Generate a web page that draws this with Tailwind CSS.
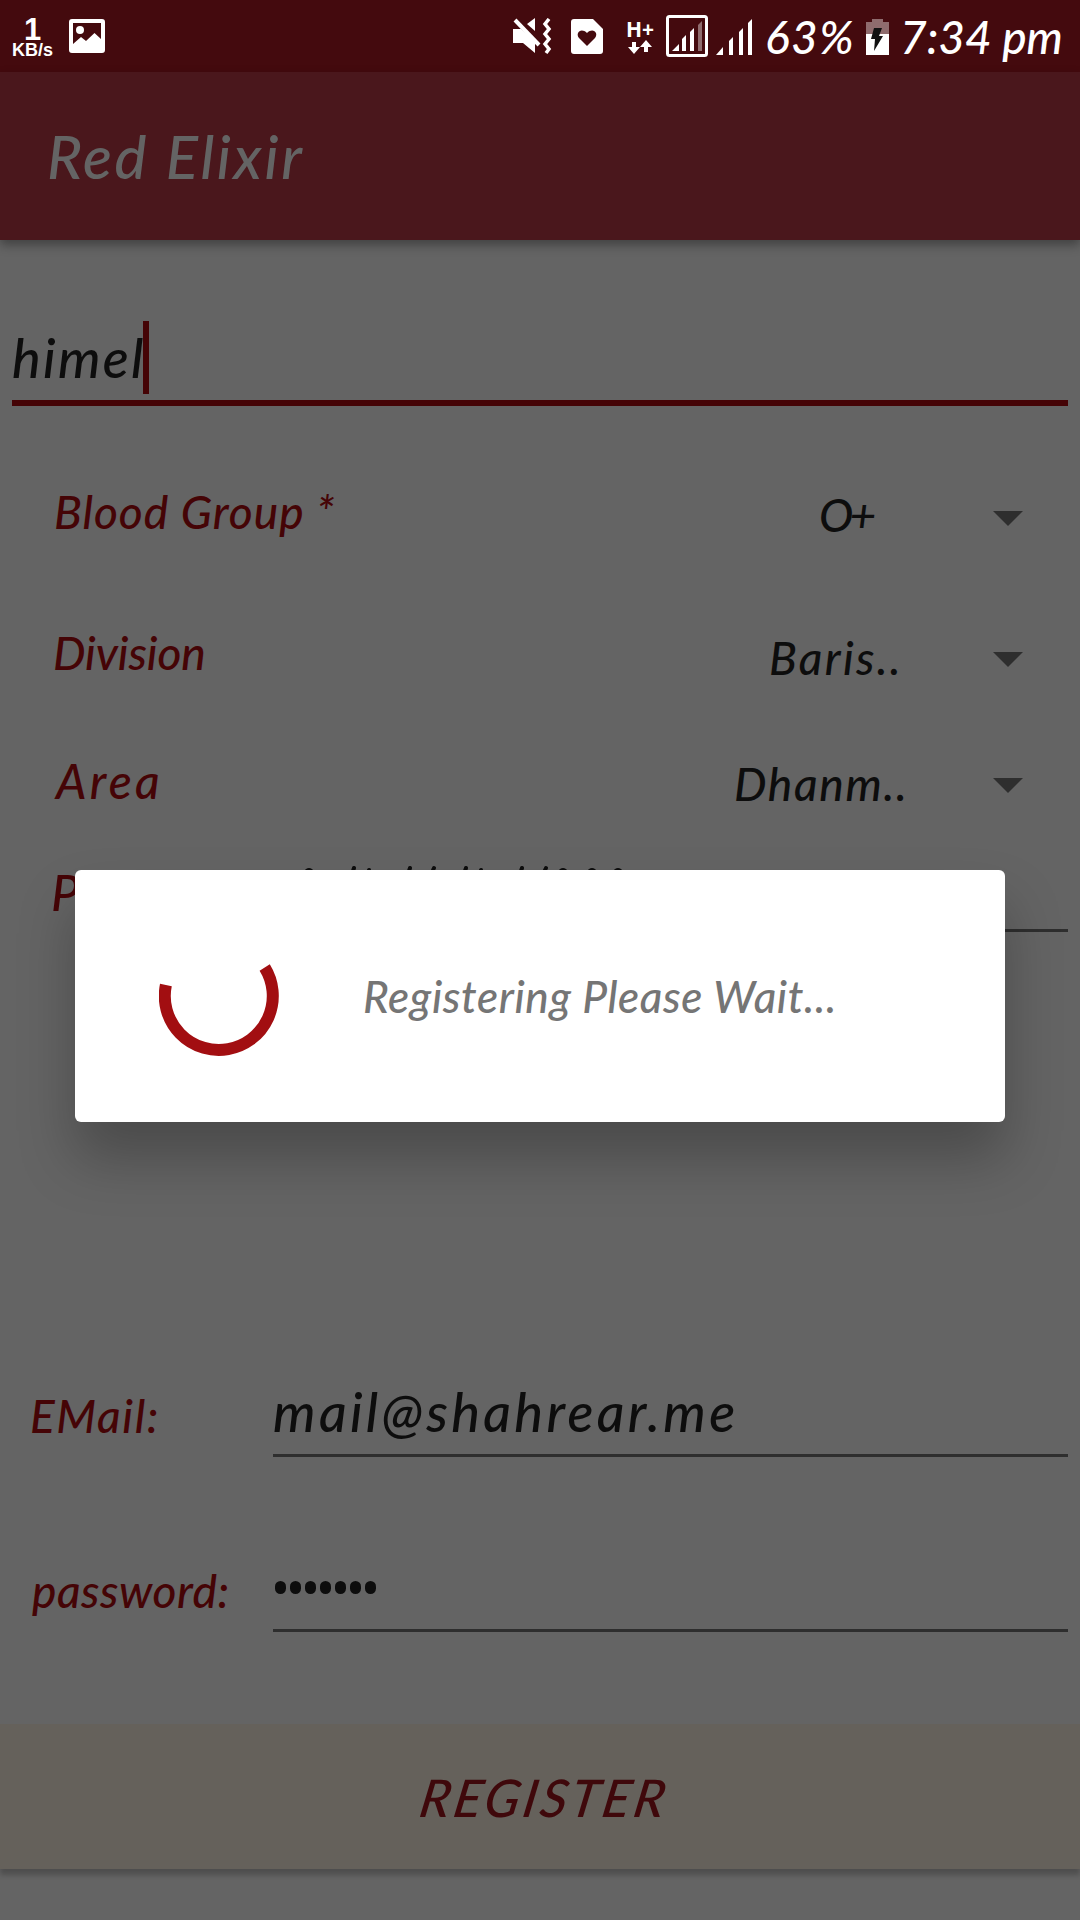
<!DOCTYPE html>
<html lang="en">
<head>
<meta charset="utf-8">
<title>Red Elixir</title>
<script src="https://cdn.jsdelivr.net/npm/@tailwindcss/browser@4"></script>
</head>
<body class="bg-[#646464]">
<div class="relative flex h-[1920px] w-[1080px] flex-col overflow-hidden bg-[#646464] font-[Lato,sans-serif] font-medium italic whitespace-nowrap text-[#0d0d0d]">

  <!-- Status bar -->
  <div class="flex h-[72px] shrink-0 items-center bg-[#440a0e] pl-[12px] text-white">
    <div class="flex w-[41px] flex-col items-center font-['Liberation_Sans',sans-serif] font-bold not-italic">
      <span class="text-[31px] leading-[31px]">1</span>
      <span class="-mt-[4px] text-[18px] leading-[18px]">KB/s</span>
    </div>
    <svg class="ml-[16px] h-[34px] w-[36px]" viewBox="0 0 36 34"><path fill="#fff" fill-rule="evenodd" d="M3 0H33Q36 0 36 3V31Q36 34 33 34H3Q0 34 0 31V3Q0 0 3 0ZM4 4V25L12 18L17 22L25.500 14L32 20V4Z"/><circle cx="11" cy="11" r="4" fill="#fff"/></svg>
    <svg class="ml-[407px] h-[37px] w-[40px]" viewBox="0 0 40 37" fill="#fff"><path d="M1 11H9L23 23V35L11 25H1ZM15 6L23 0V13Z"/><path d="M3 2L27 27" stroke="#fff" stroke-width="4"/><path d="M36 1L32 6L36 11L32 16L36 21L32 26L36 31L33 35" transform="translate(1)" fill="none" stroke="#fff" stroke-width="3.500"/></svg>
    <svg class="ml-[19px] h-[35px] w-[32px]" viewBox="0 0 32 35"><path fill="#fff" d="M3 0H22L32 10V32Q32 35 29 35H3Q0 35 0 32V3Q0 0 3 0Z"/><path fill="#440a0e" d="M16 27L8 19C4 14 10 8 16 14C22 8 28 14 24 19Z"/></svg>
    <div class="ml-[22px] flex w-[30px] flex-col items-center font-['Open_Sans',sans-serif] not-italic">
      <span class="text-[21px] leading-[22px] font-bold">H+</span>
      <svg class="h-[14px] w-[24px]" viewBox="0 0 24 14" fill="#fff"><path d="M4 2H8V7H12L6 14L0 7H4ZM16 12H20V7H24L18 0L12 7H16Z"/></svg>
    </div>
    <svg class="ml-[11px] h-[42px] w-[42px]" viewBox="0 0 42 42" fill="#fff"><rect x="1.500" y="1.500" width="39" height="39" rx="2" fill="none" stroke="#fff" stroke-width="3"/><path d="M6 36L13 29V36ZM16 24L20 20V36H16ZM24 17L28 13V36H24Z"/><path fill="#8f6c6e" d="M32 10L36 6V36H32Z"/></svg>
    <svg class="mt-[2px] ml-[8px] h-[36px] w-[36px]" viewBox="0 0 36 36" fill="#fff"><path d="M0 36L7 28V36ZM13 22L17 18V36H13ZM23 13L27 9V36H23ZM32 4L36 0V36H32Z"/></svg>
    <span class="ml-[13px] w-[98px] pt-[2px] text-[46px] leading-[56px] tracking-[1.5px]">63%</span>
    <svg class="mt-[2px] ml-[3px] h-[36px] w-[23px]" viewBox="0 0 23 36"><path fill="#8f6c6e" d="M6 0H17V3H23V16H0V3H6Z"/><path fill="#fff" d="M0 15H23V36H0Z"/><path fill="#111" d="M8 9H16L13 17H17L8 32L9 20H5Z"/></svg>
    <span class="ml-[11px] pt-[2px] text-[46px] leading-[56px]">7:34 pm</span>
  </div>

  <!-- App bar -->
  <header class="z-10 flex h-[168px] shrink-0 items-center bg-[#4a171c] pl-[47px] shadow-[0_5px_10px_rgba(0,0,0,0.35)]">
    <h1 class="text-[60px] leading-[72px] tracking-[2.7px] text-[#646464]">Red Elixir</h1>
  </header>

  <!-- Registration form -->
  <main class="flex flex-1 flex-col">
    <div class="mx-[12px] mt-[81px] flex h-[85px] shrink-0 items-start border-b-[6px] border-[#450406]">
      <span class="w-[131px] text-[54px] leading-[73px] tracking-[2.3px]">himel</span>
      <span class="h-[73px] w-[6px] bg-[#450406]"></span>
    </div>

    <div class="mt-[38px] flex h-[140px] shrink-0 items-center pr-[57px] pl-[54px] text-[46px] leading-[56px]">
      <span class="w-[765px] pb-[5px] tracking-[1px] text-[#450406]">Blood Group *</span>
      <span class="flex-1 pt-[2px] tracking-[-4px]">O+</span>
      <svg class="mt-[8px] h-[15px] w-[30px]" viewBox="0 0 30 15"><path fill="#2e2e2e" d="M0 0H30L15 15Z"/></svg>
    </div>
    <div class="flex h-[146px] shrink-0 items-center pr-[57px] pl-[53px] text-[46px] leading-[56px]">
      <span class="w-[716px] pb-[8px] tracking-[-0.1px] text-[#450406]">Division</span>
      <span class="flex-1 pt-[1px] tracking-[2.3px]">Baris..</span>
      <svg class="mt-[5px] h-[15px] w-[30px]" viewBox="0 0 30 15"><path fill="#2e2e2e" d="M0 0H30L15 15Z"/></svg>
    </div>
    <div class="flex h-[104px] shrink-0 items-center pr-[57px] pl-[56px] text-[48px] leading-[56px]">
      <span class="w-[678px] pb-[2px] tracking-[3.2px] text-[#450406]">Area</span>
      <span class="flex-1 pt-[3px] text-[46px] tracking-[1.7px]">Dhanm..</span>
      <svg class="mt-[7px] h-[15px] w-[30px]" viewBox="0 0 30 15"><path fill="#2e2e2e" d="M0 0H30L15 15Z"/></svg>
    </div>
    <div class="flex h-[98px] shrink-0 items-start pr-[12px] pl-[51px] text-[50px] leading-[56px]">
      <span class="w-[222px] pt-[30px] text-[#450406]">Phone:</span>
      <div class="h-full flex-1 border-b-[3px] border-[#2e2e2e] pt-[31px]">
        <svg class="h-[20px] w-[380px]" viewBox="0 0 380 20" fill="none" stroke="#0d0d0d" stroke-width="4" stroke-linecap="round"><path d="M81 3L76 18M96 5L93 18M137 3L132 18M161 3L154 18M193 3L188 18M208 5L205 18M249 3L244 18M273 3L266 18M32 8Q36 2 40 8M286 8Q290 2 294 8M315 8Q319 2 323 8M341 8Q345 2 349 8"/></svg>
      </div>
    </div>

    <div class="mt-[425px] flex h-[100px] shrink-0 items-center pr-[12px] pl-[30px]">
      <span class="w-[243px] pt-[17px] text-[46px] leading-[56px] tracking-[1.6px] text-[#450406]">EMail:</span>
      <div class="flex h-full flex-1 items-center border-b-[3px] border-[#2e2e2e] pt-[13px]">
        <span class="text-[54px] leading-[66px] tracking-[3.3px]">mail@shahrear.me</span>
      </div>
    </div>
    <div class="mt-[75px] flex h-[100px] shrink-0 items-center pr-[12px] pl-[32px]">
      <span class="w-[241px] pt-[18px] text-[46px] leading-[56px] tracking-[0.5px] text-[#450406]">password:</span>
      <div class="flex h-full flex-1 items-center gap-[4px] border-b-[3px] border-[#2e2e2e] pt-[14px] pl-[2px]">
        <span class="h-[13px] w-[11px] rounded-full bg-[#0d0d0d]"></span>
        <span class="h-[13px] w-[11px] rounded-full bg-[#0d0d0d]"></span>
        <span class="h-[13px] w-[11px] rounded-full bg-[#0d0d0d]"></span>
        <span class="h-[13px] w-[11px] rounded-full bg-[#0d0d0d]"></span>
        <span class="h-[13px] w-[11px] rounded-full bg-[#0d0d0d]"></span>
        <span class="h-[13px] w-[11px] rounded-full bg-[#0d0d0d]"></span>
        <span class="h-[13px] w-[11px] rounded-full bg-[#0d0d0d]"></span>
      </div>
    </div>

    <button class="mt-[92px] flex h-[145px] shrink-0 items-center justify-center bg-[#65615b] pl-[10px] text-[52px] leading-[64px] tracking-[3.4px] text-[#3f080b] italic shadow-[0_6px_5px_rgba(0,0,0,0.22)]"><span class="-skew-x-10">REGISTER</span></button>
  </main>

  <!-- Progress dialog -->
  <div class="absolute top-[870px] left-[75px] z-20 flex h-[252px] w-[930px] items-center rounded-[6px] bg-white pl-[84px] shadow-[0_36px_56px_rgba(0,0,0,0.26)]">
    <svg class="h-[120px] w-[120px]" viewBox="0 0 120 120"><path d="M6.900 49A54 54 0 1 0 105.700 31.500" fill="none" stroke="#a20e11" stroke-width="12"/></svg>
    <span class="ml-[84px] text-[44px] leading-[54px] tracking-[0.6px] text-[#757575]">Registering Please Wait...</span>
  </div>
</div>
</body>
</html>
